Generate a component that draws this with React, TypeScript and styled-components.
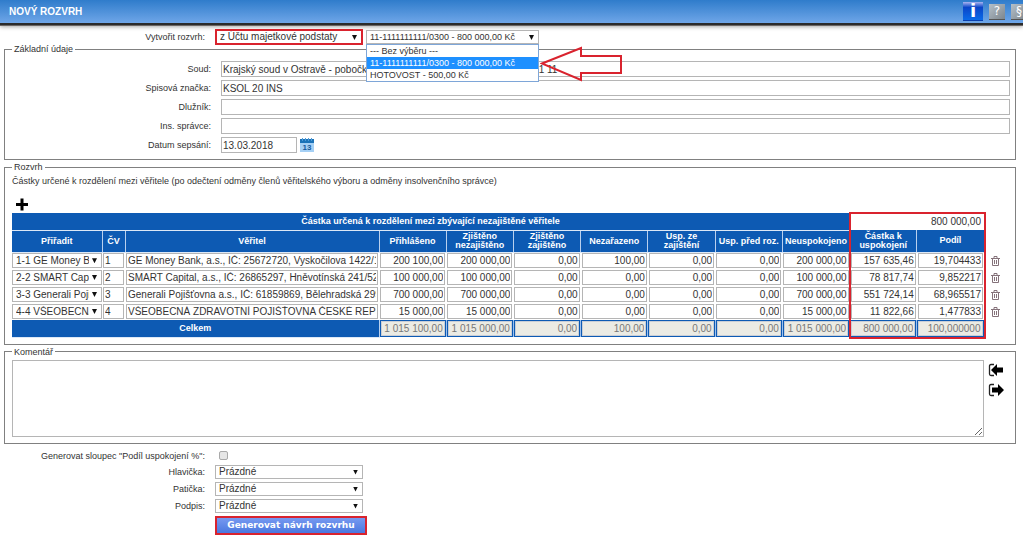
import React from "react";
import styled, { createGlobalStyle } from "styled-components";

const Global = createGlobalStyle`
  *, *::before, *::after { box-sizing: border-box; }
  body { margin: 0; background: #fff; color: #333; font: 9px/12px "Liberation Sans", Arial, sans-serif; }
  input, select, textarea, button { font: inherit; font-size: 10px; color: inherit; margin: 0; border-radius: 0; outline: none; }
`;

const Header = styled.header`
  display: flex;
  align-items: center;
  justify-content: space-between;
  height: 23px;
  padding-left: 9px;
  overflow: hidden;
  background: linear-gradient(#2f7ccb, #6fa6e8);
  box-shadow: 0 2px 0 #2b2b2b, 0 3px 0 #6b6663, 0 4px 4px #aaa;
`;
const Title = styled.h1`
  margin: 0;
  font-size: 10px;
  line-height: 20px;
  font-weight: bold;
  color: #fff;
`;
const Tools = styled.div`
  display: flex;
  align-items: center;
  gap: 6px;
  margin-right: -4px;
`;
const ToolButton = styled.button<{ $info?: boolean }>`
  width: ${p => (p.$info ? 20 : 16)}px;
  height: ${p => (p.$info ? 19 : 16)}px;
  padding: 0;
  border: 0;
  border-bottom: 1px solid ${p => (p.$info ? "#0a3fae" : "#555")};
  background: ${p => (p.$info ? "linear-gradient(#a9b4f0, #0a45c8 30%, #0a6be8)" : "linear-gradient(135deg, #b5c0c9, #7d868d)")};
  color: #fff;
  font: ${p => (p.$info ? 'bold 18px/18px "DejaVu Sans"' : '12px/15px "DejaVu Sans"')}, sans-serif;
`;

const Page = styled.main`
  padding: 6px 7px 8px 4px;
`;

const Row = styled.div<{ $label?: number }>`
  display: grid;
  grid-template-columns: ${p => p.$label || 201}px minmax(0, 1fr);
  column-gap: 10px;
  align-items: center;
  > label { text-align: right; }
`;
const Inline = styled.div`
  display: flex;
  align-items: center;
  gap: 3px;
`;

const SelectBox = styled.span<{ $w?: number; $frame?: boolean; $h?: number }>`
  position: relative;
  display: block;
  width: ${p => (p.$w ? p.$w + "px" : "100%")};
  border: ${p => (p.$frame ? "2px solid #d9232e" : "1px solid #b5b5b5")};
  background: #fff;
  &::after {
    content: "";
    position: absolute;
    right: 4px;
    top: 4px;
    width: 5px;
    height: 5px;
    background: #111;
    clip-path: polygon(0 0, 100% 0, 50% 100%);
    pointer-events: none;
  }
  select {
    display: block;
    width: 100%;
    height: ${p => p.$h || 12}px;
    padding: 0 12px 0 3px;
    border: 0;
    background: transparent;
    appearance: none;
    line-height: 12px;
  }
`;
const Select = ({ w, h, frame, id, value, label }: { w?: number; h?: number; frame?: boolean; id?: string; value: string; label?: string }) => (
  <SelectBox $w={w} $h={h} $frame={frame}>
    <select id={id} aria-label={label}><option>{value}</option></select>
  </SelectBox>
);

const Combo = styled.div`
  position: relative;
  width: 173px;
  select { font-size: 9px; }
`;
const Menu = styled.ul`
  position: absolute;
  z-index: 2;
  top: 100%;
  left: 0;
  right: 0;
  margin: 0;
  padding: 0;
  list-style: none;
  border: 1px solid #7ea6d8;
  background: #fff;
`;
const Option = styled.li<{ $on?: boolean }>`
  padding-left: 3px;
  line-height: 12px;
  color: ${p => (p.$on ? "#fff" : "#333")};
  background: ${p => (p.$on ? "#1e90ff" : "#fff")};
`;
const Pointer = styled.svg`
  position: absolute;
  z-index: 3;
  left: 174px;
  top: 16px;
`;

const Group = styled.fieldset`
  min-width: 0;
  margin: 0 0 3px;
  padding: 4px 5px 6px 7px;
  border: 1px solid #808080;
`;
const Legend = styled.legend`
  padding: 0 2px;
  line-height: 8px;
`;
const Fields = styled.div`
  display: grid;
  gap: 3px;
  padding-top: 4px;
`;
const Field = styled.input<{ $w?: number }>`
  width: ${p => (p.$w ? p.$w + "px" : "100%")};
  height: 16px;
  padding: 0 1px;
  border: 1px solid #b5b5b5;
  background: #fff;
`;
const IconButton = styled.button`
  display: block;
  padding: 0;
  border: 0;
  background: none;
  svg { display: block; }
`;
const AddButton = styled(IconButton)`
  margin-bottom: 2px;
`;
const DeleteButton = styled(IconButton)`
  margin-left: 7px;
`;

const Note = styled.p`
  margin: 0 0 10px;
`;
const TableWrap = styled.div`
  position: relative;
`;
const Table = styled.table`
  width: 100%;
  table-layout: fixed;
  border-collapse: collapse;
  td, th { padding: 0; }
`;
const HeadCell = styled.th<{ $h?: number }>`
  height: ${p => p.$h || 17}px;
  border-right: 1px solid #b9d0ee;
  border-bottom: 1px solid #dce8f7;
  background: #0d5ab3;
  color: #fff;
  font-weight: bold;
  line-height: 9px;
`;
const Cell = styled.td<{ $total?: boolean }>`
  height: 17px;
  border-right: ${p => (p.$total ? "1px solid #9cc0ee" : "0")};
  background: ${p => (p.$total ? "#0d5ab3" : "#fff")};
`;
const CellInput = styled.input<{ $left?: boolean; $bare?: boolean }>`
  display: block;
  width: calc(100% - 2px);
  height: 15px;
  margin-left: 1px;
  padding: 0 1px;
  border: 1px solid ${p => (p.$bare ? "transparent" : "#b5b5b5")};
  background: #fff;
  text-align: ${p => (p.$left ? "left" : "right")};
  &:disabled { background: #ebebe4; color: #777; border-color: #c9ced6; }
`;
const Frame = styled.div`
  position: absolute;
  top: -1px;
  bottom: -1px;
  right: 24px;
  width: 137px;
  border: 2px solid #d9232e;
  pointer-events: none;
`;

const CommentRow = styled.div`
  display: flex;
  align-items: flex-start;
  gap: 4px;
`;
const Comment = styled.textarea`
  flex: 1;
  height: 77px;
  border: 1px solid #b5b5b5;
  resize: vertical;
`;
const Side = styled.div`
  display: grid;
  gap: 6px;
  width: 22px;
  padding-top: 3px;
`;
const Footer = styled.div`
  display: grid;
  gap: 3px;
  padding-top: 3px;
`;
const Check = styled.input`
  width: 9px;
  height: 9px;
  margin: 0 0 0 4px;
  appearance: none;
  border: 1px solid #a9a9a9;
  border-radius: 2px;
  background: #e6e6e6;
`;
const Generate = styled.button`
  width: 152px;
  height: 19px;
  padding: 0;
  border: 2px solid #d9232e;
  background: linear-gradient(#7799f0, #4a78e0);
  color: #fff;
  font: bold 9px/15px "DejaVu Sans", sans-serif;
`;

const columns = ["Přiřadit", "ČV", "Věřitel", "Přihlášeno", "Zjištěno nezajištěno", "Zjištěno zajištěno", "Nezařazeno", "Usp. ze zajištění", "Usp. před roz.", "Neuspokojeno", "Částka k uspokojení", "Podíl"];
const rows = [
  ["1-1 GE Money Bank", "1", "GE Money Bank, a.s., IČ: 25672720, Vyskočilova 1422/1a, Praha", "200 100,00", "200 000,00", "0,00", "100,00", "0,00", "0,00", "200 000,00", "157 635,46", "19,704433"],
  ["2-2 SMART Capital", "2", "SMART Capital, a.s., IČ: 26865297, Hněvotínská 241/52, Olomouc", "100 000,00", "100 000,00", "0,00", "0,00", "0,00", "0,00", "100 000,00", "78 817,74", "9,852217"],
  ["3-3 Generali Pojišťovna", "3", "Generali Pojišťovna a.s., IČ: 61859869, Bělehradská 299/132, Praha", "700 000,00", "700 000,00", "0,00", "0,00", "0,00", "0,00", "700 000,00", "551 724,14", "68,965517"],
  ["4-4 VŠEOBECNÁ", "4", "VŠEOBECNÁ ZDRAVOTNÍ POJIŠŤOVNA ČESKÉ REPUBLIKY", "15 000,00", "15 000,00", "0,00", "0,00", "0,00", "0,00", "15 000,00", "11 822,66", "1,477833"],
];
const totals = ["1 015 100,00", "1 015 000,00", "0,00", "100,00", "0,00", "0,00", "1 015 000,00", "800 000,00", "100,000000"];

const Trash = () => (
  <svg width="9" height="10" viewBox="0 0 9 10" fill="none" stroke="#85727a">
    <path d="M0 2.500h9M3 2V.5h3V2M1.500 3v6.500h6V3M3.500 4v4M5.500 4v4" />
  </svg>
);
const Arrow = ({ left }: { left?: boolean }) => (
  <svg width="16" height="14" viewBox="0 0 16 14">
    <path d="M6 1.500H3Q1.500 1.500 1.500 3v8q0 1.500 1.500 1.500h3" fill="none" stroke="#222" strokeWidth="1.300" />
    <path d={left ? "M3 7l6-6v3.500h6v5H9V13z" : "M16 7l-6-6v3.500H4v5h6V13z"} fill="#000" />
  </svg>
);

export default function App() {
  return (
    <>
      <Global />
      <Header>
        <Title>NOVÝ ROZVRH</Title>
        <Tools>
          <ToolButton $info>i</ToolButton>
          <ToolButton>?</ToolButton>
          <ToolButton>§</ToolButton>
        </Tools>
      </Header>
      <Page>
        <Row>
          <label htmlFor="source">Vytvořit rozvrh:</label>
          <Inline>
            <Select id="source" w={148} frame value="z Účtu majetkové podstaty" />
            <Combo>
              <Select label="Účet" value="11-1111111111/0300 - 800 000,00 Kč" />
              <Menu>
                <Option>--- Bez výběru ---</Option>
                <Option $on>11-1111111111/0300 - 800 000,00 Kč</Option>
                <Option>HOTOVOST - 500,00 Kč</Option>
              </Menu>
              <Pointer width="82" height="36" viewBox="0 0 82 36" fill="none" stroke="#d9232e" strokeWidth="2">
                <path d="M2 17.500L41 2v8h40v17H41v7z" />
              </Pointer>
            </Combo>
          </Inline>
        </Row>
        <Group>
          <Legend>Základní údaje</Legend>
          <Fields>
            <Row $label={199}><label htmlFor="court">Soud:</label><Field id="court" defaultValue="Krajský soud v Ostravě - pobočka v Olomouci, ul. Studentská 187/8, 771 11" /></Row>
            <Row $label={199}><label htmlFor="file">Spisová značka:</label><Field id="file" defaultValue="KSOL 20 INS" /></Row>
            <Row $label={199}><label htmlFor="debtor">Dlužník:</label><Field id="debtor" /></Row>
            <Row $label={199}><label htmlFor="trustee">Ins. správce:</label><Field id="trustee" /></Row>
            <Row $label={199}>
              <label htmlFor="date">Datum sepsání:</label>
              <Inline>
                <Field id="date" $w={76} defaultValue="13.03.2018" />
                <IconButton aria-label="Kalendář">
                  <svg width="14" height="14" viewBox="0 0 14 14">
                    <rect width="14" height="14" y="1" fill="#a5d0f5" /><rect y="1" width="14" height="4" fill="#1b73b8" />
                    <path d="M2.500 0v3M5.500 0v3M8.500 0v3M11.500 0v3" stroke="#4f9bd8" />
                    <text x="7" y="12" textAnchor="middle" fontSize="8" fontWeight="bold" fill="#155a9c">13</text>
                  </svg>
                </IconButton>
              </Inline>
            </Row>
          </Fields>
        </Group>
        <Group>
          <Legend>Rozvrh</Legend>
          <Note>Částky určené k rozdělení mezi věřitele (po odečtení odměny členů věřitelského výboru a odměny insolvenčního správce)</Note>
          <AddButton aria-label="Přidat">
            <svg width="20" height="14" viewBox="0 0 20 14"><path d="M4 7.500h12M10 1.500v12" stroke="#000" strokeWidth="3" /></svg>
          </AddButton>
          <TableWrap>
            <Table>
              <colgroup>
                <col style={{ width: 90 }} /><col style={{ width: 23 }} /><col style={{ width: 254 }} />
                {totals.map((_, i) => <col key={i} />)}
                <col style={{ width: 26 }} />
              </colgroup>
              <thead>
                <tr>
                  <HeadCell colSpan={10}>Částka určená k rozdělení mezi zbývající nezajištěné věřitele</HeadCell>
                  <td colSpan={2}><CellInput $bare aria-label="Částka" defaultValue="800 000,00" /></td>
                </tr>
                <tr>{columns.map(c => <HeadCell key={c} $h={22}>{c}</HeadCell>)}</tr>
              </thead>
              <tbody>
                {rows.map(r => (
                  <tr key={r[0]}>
                    <Cell><Select value={r[0]} label="Přiřadit" h={13} /></Cell>
                    {r.slice(1).map((v, i) => <Cell key={i}><CellInput $left={i < 2} aria-label={columns[i + 1]} defaultValue={v} /></Cell>)}
                    <Cell><DeleteButton aria-label="Smazat"><Trash /></DeleteButton></Cell>
                  </tr>
                ))}
              </tbody>
              <tfoot>
                <tr>
                  <HeadCell colSpan={3}>Celkem</HeadCell>
                  {totals.map((v, i) => <Cell key={i} $total><CellInput disabled aria-label={columns[i + 3]} defaultValue={v} /></Cell>)}
                </tr>
              </tfoot>
            </Table>
            <Frame />
          </TableWrap>
        </Group>
        <Group>
          <Legend>Komentář</Legend>
          <CommentRow>
            <Comment aria-label="Komentář" />
            <Side>
              <IconButton aria-label="Načíst"><Arrow left /></IconButton>
              <IconButton aria-label="Uložit"><Arrow /></IconButton>
            </Side>
          </CommentRow>
        </Group>
        <Footer>
          <Row><label htmlFor="share">Generovat sloupec "Podíl uspokojení %":</label><Check id="share" type="checkbox" /></Row>
          <Row><label htmlFor="head">Hlavička:</label><Select id="head" w={148} value="Prázdné" /></Row>
          <Row><label htmlFor="foot">Patička:</label><Select id="foot" w={148} value="Prázdné" /></Row>
          <Row><label htmlFor="sign">Podpis:</label><Select id="sign" w={148} value="Prázdné" /></Row>
          <Row><span /><Generate>Generovat návrh rozvrhu</Generate></Row>
        </Footer>
      </Page>
    </>
  );
}
